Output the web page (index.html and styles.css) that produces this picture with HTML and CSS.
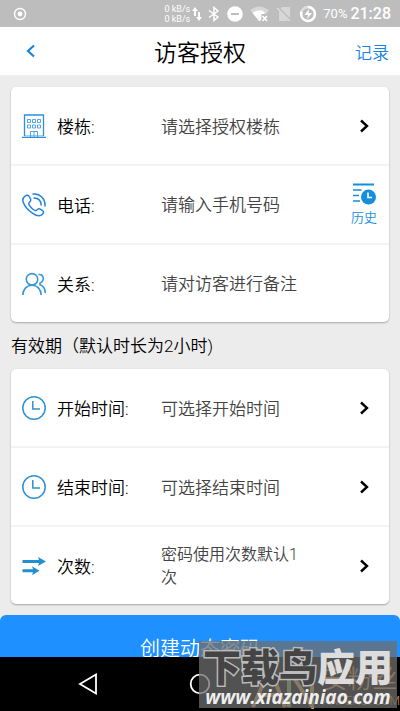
FILE: index.html
```html
<!DOCTYPE html>
<html lang="zh-CN">
<head>
<meta charset="utf-8">
<meta name="viewport" content="width=device-width, initial-scale=1">
<title>访客授权</title>
<link rel="stylesheet" href="styles.css">
</head>
<body>
<div class="statusbar">
  <svg class="record" width="14" height="14" viewBox="0 0 14 14"><circle cx="7" cy="7" r="5.5" fill="none" stroke="#fff" stroke-width="1.4"/><circle cx="7" cy="7" r="2.4" fill="#fff"/></svg>
  <div class="speed"><span>0 kB/s</span><span>0 kB/s</span></div>
  <svg width="10" height="16" viewBox="0 0 10 16" fill="#fff"><path d="M0 5 3 1l3 4H4v5H2V5zM4 11h2V6h2v5h2l-3 4z"/></svg>
  <svg class="bluetooth" width="12" height="16" viewBox="0 0 12 16" fill="none" stroke="#fff" stroke-width="1.5"><path d="M1 4.5 10 11 6 14.5V1.500L10 5 1 11.500"/></svg>
  <svg class="dnd" width="16" height="16" viewBox="0 0 16 16"><circle cx="8" cy="8" r="7.800" fill="#fff"/><path d="M4 8h8" stroke="#bdbdbd" stroke-width="2"/></svg>
  <svg class="wifi" width="19" height="16" viewBox="0 0 19 16"><path d="M0 4Q9.500-3 19 4L16 8H12V13L9.500 15.500z" fill="#fff" opacity=".4"/><path d="M2.500 7Q9.500 2 15 6.500L14 8H11V13.500L9.500 15.500z" fill="#fff"/><path d="m12.500 10 4.500 5m0-5-4.500 5" stroke="#fff" stroke-width="1.600"/></svg>
  <svg class="sim" width="16" height="16" viewBox="0 0 16 16"><path d="M6 1h8v14H3V4z" fill="#d6d6d6"/><path d="m1 1 14 14" stroke="#bdbdbd" stroke-width="3"/><path d="m1 2 13 13" stroke="#dcdcdc" stroke-width="1.300"/></svg>
  <svg class="battery" width="18" height="18" viewBox="0 0 18 18"><circle cx="9" cy="9" r="7" fill="none" stroke="#dedede" stroke-width="2.400"/><path d="M9 2a7 7 0 1 1-6.500 4.500" fill="none" stroke="#fff" stroke-width="2.400"/><path d="M10 4 5.500 10H9l-1 4 5-6H9.500z" fill="#fff"/></svg>
  <span class="percent">70%</span>
  <time class="time">21:28</time>
</div>

<header class="header">
  <button class="back" type="button" aria-label="返回"><svg width="10" height="14" viewBox="0 0 10 14"><path d="M8 1.500 2 7l6 5.500" fill="none" stroke="#1a82e2" stroke-width="2.200"/></svg></button>
  <h1>访客授权</h1>
  <a class="records" href="#records">记录</a>
</header>

<main class="content">
  <section class="card">
    <div class="row">
      <svg class="icon" viewBox="0 0 24 24" fill="none" stroke="#2b8fdf"><path d="M2.500 22V1h19v21" stroke-width="1.300"/><path d="M0 23.500h24" stroke-width="1.500"/><path d="M2 21.800h20" opacity=".6"/><path d="M5.500 5.500h3v3h-3zm5 0h3v3h-3zm5 0h3v3h-3zm-10 5.500h3v3h-3zm5 0h3v3h-3zm5 0h3v3h-3zM8.500 23v-5.500h7V23M12 18v5" stroke-width=".8"/></svg>
      <label class="name" for="building">楼栋:</label>
      <button class="value" id="building" type="button">请选择授权楼栋</button>
      <svg class="chevron" viewBox="0 0 10 14"><path d="m2 1.500 6 5.500-6 5.500"/></svg>
    </div>
    <div class="row">
      <svg class="icon" viewBox="0 0 24 24" fill="none" stroke="#2583dc" stroke-width="1.500" stroke-linecap="round"><path d="M3 3.200C5 1.500 6.500 2 7.500 4l1 2c.8 1.600-.2 2.600-1.200 3.500-.9.900-.6 1.800.3 3.100 1.200 1.800 2.600 3.200 4.400 4.400 1.300.9 2.200 1 3-.1.800-1.100 2-1.500 3.300-.8l2 1.200c1.500 1 1.500 2.300.4 3.600-2.200 2.700-5.600 2.400-10-.5C6.500 17.500 3 14 1.300 9.500.300 6.800.9 4.800 3 3.200zM11 1c7-.8 12.500 5 12 12M12 5c4.200.2 7 3 7.200 7"/></svg>
      <label class="name" for="phone">电话:</label>
      <input class="value" id="phone" type="tel" placeholder="请输入手机号码">
      <a class="history" href="#history">
        <svg width="24" height="22" viewBox="0 0 24 22" fill="none" stroke="#168fdb"><path d="M1 1.500h21" stroke-width="2"/><path d="M1 7h8.500M1 12.500h6M1 18h7" stroke-width="1.600"/><circle cx="16.500" cy="14" r="7.500" fill="#168fdb" stroke="none"/><path d="M16 9.500V14.500h4" stroke="#fff" stroke-width="1.600"/></svg>
        <span>历史</span>
      </a>
    </div>
    <div class="row">
      <svg class="icon" viewBox="0 0 24 24" fill="none" stroke="#3598d8" stroke-width="1.600"><circle cx="10" cy="7.300" r="5.700"/><path d="M.800 23C1 17 5 13.300 10 13.300S19 17 19.200 23M16.500 2.500c3.500-.5 5.500 2.500 4.500 5.500-.5 1.500-1.500 2.500-3 3.300v1.500c3.200 1.200 5.200 4 5.300 8.200"/></svg>
      <label class="name" for="relation">关系:</label>
      <input class="value" id="relation" type="text" placeholder="请对访客进行备注">
    </div>
  </section>

  <h2 class="caption">有效期（默认时长为2小时)</h2>

  <section class="card">
    <div class="row">
      <svg class="icon" viewBox="0 0 24 24" fill="none" stroke="#2e93d2" stroke-width="1.500"><circle cx="12" cy="12" r="11.200"/><path d="M10.800 5v8H18"/></svg>
      <label class="name" for="start">开始时间:</label>
      <button class="value" id="start" type="button">可选择开始时间</button>
      <svg class="chevron" viewBox="0 0 10 14"><path d="m2 1.500 6 5.500-6 5.500"/></svg>
    </div>
    <div class="row">
      <svg class="icon" viewBox="0 0 24 24" fill="none" stroke="#2e93d2" stroke-width="1.500"><circle cx="12" cy="12" r="11.200"/><path d="M10.800 5v8H18"/></svg>
      <label class="name" for="end">结束时间:</label>
      <button class="value" id="end" type="button">可选择结束时间</button>
      <svg class="chevron" viewBox="0 0 10 14"><path d="m2 1.500 6 5.500-6 5.500"/></svg>
    </div>
    <div class="row">
      <svg class="icon" viewBox="0 0 24 24" fill="#228fd0"><path d="M.500 6H17L16 3l8 4.500-8 4.500 1-3H.500zM.500 15.200H11l-1-3 7.500 4.500-7.500 4.500 1-3H.500z"/></svg>
      <label class="name" for="times">次数:</label>
      <button class="value compact" id="times" type="button">密码使用次数默认1次</button>
      <svg class="chevron" viewBox="0 0 10 14"><path d="m2 1.500 6 5.500-6 5.500"/></svg>
    </div>
  </section>

  <button class="submit" type="button">创建动态密码</button>
</main>

<nav class="navbar" aria-label="系统导航">
  <button type="button" aria-label="后退"><svg width="22" height="22" viewBox="0 0 22 22"><path d="M18 1.500v19L2 11z" fill="none" stroke="#fff" stroke-width="1.800"/></svg></button>
  <button type="button" aria-label="主页"><svg width="22" height="22" viewBox="0 0 22 22"><circle cx="11" cy="11" r="9.300" fill="none" stroke="#fff" stroke-width="1.800"/></svg></button>
  <span></span>
</nav>

<div class="watermark">
  <div class="under">
    <svg class="mark" width="66" height="44" viewBox="0 0 66 44" fill="none" stroke-width="4"><path d="M2 42 19 3l15 39M9 30h18" stroke="#d09a50"/><path d="M38 42V5" stroke="#7fb050"/><path d="m38 5 23 36V3" stroke="#d09a50"/></svg>
    <div class="brand"><span>安粉丝</span><small>ANFENSI.COM</small></div>
  </div>
  <div class="over">
    <strong><span class="dark">下载鸟</span><span class="light">应用</span></strong>
    <em>www.xiazainiao.com</em>
  </div>
</div>
</body>
</html>
```
FILE: styles.css
```css
* {
  box-sizing: border-box;
}

body {
  margin: 0;
  height: 100vh;
  display: flex;
  flex-direction: column;
  position: relative;
  overflow: hidden;
  background: #ececec;
  color: #000;
  font-family: Roboto, "Noto Sans CJK SC", sans-serif;
  font-size: 17px;
  font-weight: 350;
}

button,
input {
  margin: 0;
  padding: 0;
  border: 0;
  background: none;
  font: inherit;
  color: inherit;
}

a {
  text-decoration: none;
}

svg {
  display: block;
  flex: none;
}

.statusbar {
  flex: none;
  height: 27px;
  padding: 0 9px 0 13px;
  display: flex;
  align-items: center;
  background: #bdbdbd;
  color: #fff;
  font-weight: 400;
}

.record {
  margin-right: auto;
}

.speed {
  display: flex;
  flex-direction: column;
  margin-right: 2px;
  font-size: 9px;
  line-height: 10px;
}

.bluetooth {
  margin-left: 6px;
}

.dnd,
.wifi,
.sim,
.battery {
  margin-left: 7px;
}

.percent {
  margin-left: 6px;
  font-size: 13px;
}

.time {
  margin-left: 3px;
  font-size: 16px;
  font-weight: 500;
}

.header {
  flex: none;
  height: 48px;
  padding: 0 11px 0 24px;
  display: grid;
  grid-template-columns: 1fr auto 1fr;
  align-items: center;
  background: #fff;
}

.back {
  justify-self: start;
  padding: 2px;
}

.header h1 {
  margin: 0;
  padding-right: 13px;
  color: #000;
  font-size: 23px;
  font-weight: 350;
}

.records {
  justify-self: end;
  color: #1a82e2;
}

.content {
  flex: 1;
  min-height: 0;
  overflow: hidden;
  padding-top: 12px;
}

.card {
  margin: 0 11px;
  border-radius: 5px;
  background: #fff;
  box-shadow: 0 1px 2px rgba(0, 0, 0, 0.3);
}

.row {
  height: 79px;
  padding: 0 20px 0 11px;
  display: flex;
  align-items: center;
  border-bottom: 2px solid #f3f3f3;
}

.row:last-child {
  height: 77px;
  border-bottom: 0;
}

.icon {
  width: 24px;
  height: 24px;
}

.name {
  flex: none;
  width: 104px;
  margin-left: 11px;
}

.value {
  flex: 1;
  min-width: 0;
  text-align: left;
  color: #444;
}

.value::placeholder {
  color: #444;
  opacity: 1;
}

.compact {
  padding-right: 55px;
  font-size: 16px;
  line-height: 23px;
}

.chevron {
  width: 10px;
  height: 14px;
  fill: none;
  stroke: #000;
  stroke-width: 2.4;
}

.history {
  display: flex;
  flex-direction: column;
  align-items: center;
  gap: 4px;
  margin-right: -8px;
  color: #168fdb;
  font-size: 13px;
  line-height: 18px;
}

.caption {
  margin: 0 11px;
  padding-top: 2px;
  font-size: 17px;
  font-weight: 350;
  line-height: 45px;
}

.submit {
  display: block;
  width: 100%;
  height: 64px;
  margin-top: 11px;
  border-radius: 6px;
  background: #1e90ff;
  color: #fff;
  font-size: 20px;
}

.navbar {
  flex: none;
  height: 54px;
  padding: 0 34px;
  display: grid;
  grid-template-columns: repeat(3, 1fr);
  align-items: center;
  justify-items: center;
  background: #000;
}

.watermark {
  position: absolute;
  right: 0;
  bottom: 0;
  width: 201px;
  height: 70px;
}

.under {
  position: absolute;
  right: 0;
  bottom: 2px;
  display: flex;
  align-items: center;
  gap: 5px;
}

.brand {
  display: flex;
  flex-direction: column;
  color: #d09a50;
}

.brand span {
  font-size: 25px;
  line-height: 28px;
}

.brand small {
  font-size: 12px;
  line-height: 14px;
}

.over {
  position: absolute;
  inset: 0 3px 3px 0;
  display: flex;
  flex-direction: column;
  align-items: center;
  background: rgba(110, 110, 110, 0.75);
  white-space: nowrap;
}

.over strong {
  margin-top: 9px;
  font-size: 38px;
  font-weight: 900;
  line-height: 36px;
}

.dark {
  color: #444;
  -webkit-text-stroke: 3px #bbb;
  paint-order: stroke fill;
}

.light {
  color: #ddd;
}

.over em {
  color: #eee;
  font-family: "Open Sans", sans-serif;
  font-size: 19px;
  font-weight: 700;
  line-height: 22px;
}
```
